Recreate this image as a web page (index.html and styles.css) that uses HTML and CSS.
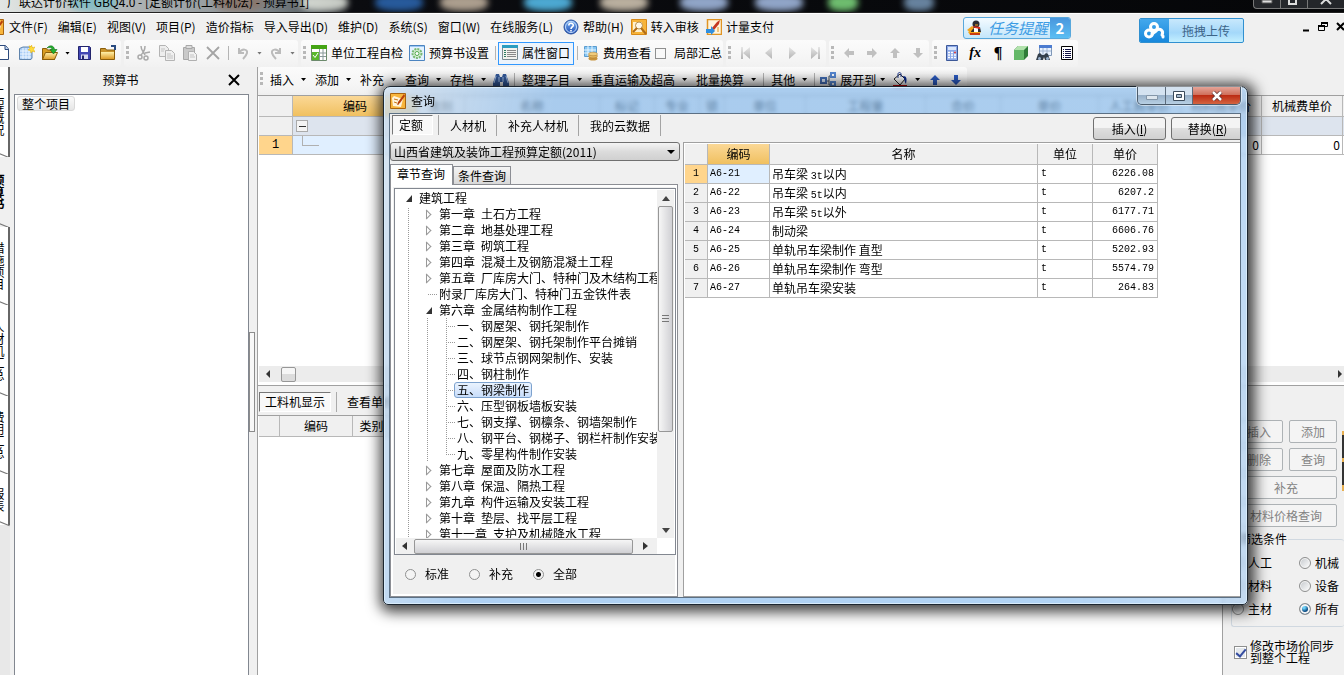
FILE: index.html
```html
<!DOCTYPE html>
<html lang="zh-CN">
<head>
<meta charset="utf-8">
<title>广联达计价软件 GBQ4.0</title>
<link rel="stylesheet" href="styles.css">
</head>
<body>
<svg class="defs" aria-hidden="true">
  <defs>
    <linearGradient id="gBlue" x1="0" y1="0" x2="0" y2="1"><stop offset="0" stop-color="#7db4f2"/><stop offset="1" stop-color="#1d4cb4"/></linearGradient>
    <linearGradient id="gGold" x1="0" y1="0" x2="0" y2="1"><stop offset="0" stop-color="#fff0a8"/><stop offset="1" stop-color="#dd9c28"/></linearGradient>
    <linearGradient id="gGrey" x1="0" y1="0" x2="0" y2="1"><stop offset="0" stop-color="#e6e6e6"/><stop offset="1" stop-color="#b4b4b4"/></linearGradient>
  </defs>
  <symbol id="page" viewBox="0 0 12 16"><path d="M-4 .5H5.500L8.500 4V14.500H-4z" fill="#fff" stroke="#2c4a7c"/><path d="M5 1v3.500h3.500" fill="#bcd4f4" stroke="#2c4a7c"/></symbol>
  <symbol id="newtable" viewBox="0 0 16 16"><path d="M.5 3.500 4 2h9v11l-1 1.500H.5z" fill="#a9cdf6" stroke="#6084ac"/><path d="M4 3v11M7 3v11M10 3v11M1 6h11M1 9h11M1 12h11" stroke="#eef6ff"/><path d="m12.500 0 .9 2.700L16 2l-1.500 2.200L16 7l-2.700-.8L12 8l-.6-2.500L9 5l2-1.500L10 .8l2 1z" fill="#ffdc3c" stroke="#e8b000" stroke-width=".5"/></symbol>
  <symbol id="open" viewBox="0 0 16 16"><path d="M.5 14.500v-11h4l1 1.500h7v9.500z" fill="#d99d22" stroke="#8b5e0a"/><path d="m.5 14.500 3-7h12l-3 7z" fill="url(#gGold)" stroke="#8b5e0a"/><path d="M5 3c3-3.500 7-2.500 7.500 1.500H15L11.500 9 8 4.500h2.200C9.800 2.500 7.500 2 5 3z" fill="#26b030" stroke="#0e6c16" stroke-width=".6"/></symbol>
  <symbol id="save" viewBox="0 0 16 16"><path d="M1.500 1.500h11l1 1v12h-12z" fill="#4246b4" stroke="#22246c"/><path d="M4 2h7v5H4z" fill="#fff"/><path d="M4 9.500h7V14H4z" fill="#d8d8ee"/><path d="M5 10.500h2V14H5z" fill="#22246c"/></symbol>
  <symbol id="folder" viewBox="0 0 16 16"><path d="M.5 14.500v-11h5l1 1.500h8v9.500z" fill="#c9942c" stroke="#8b5e0a"/><path d="M1 7h13v7H1z" fill="url(#gGold)"/><path d="M11 1h4v4" fill="none" stroke="#294b80" stroke-width="2"/></symbol>
  <symbol id="cut" viewBox="0 0 16 16"><path d="M5 1c0 4 2 5 4 9M9 1c0 4-1 6-4 9M9 8l5-1" stroke="#aaa" stroke-width="1.500" fill="none"/><circle cx="4" cy="12" r="2" fill="none" stroke="#aaa" stroke-width="1.500"/><circle cx="10" cy="13" r="2" fill="none" stroke="#aaa" stroke-width="1.500"/></symbol>
  <symbol id="copy" viewBox="0 0 16 16"><path d="M.5 .5h6l3 3v8h-9z" fill="#eee" stroke="#b4b4b4"/><path d="M6.500 5.500h6l3 3v7h-9z" fill="#f0f0f0" stroke="#b4b4b4"/><path d="M2 4h4M2 6h3M8 9h4M8 11h6M8 13h6" stroke="#c4c4c4"/></symbol>
  <symbol id="paste" viewBox="0 0 16 16"><path d="M1.500 2.500h11v12h-11z" fill="#c9c9c9" stroke="#a8a8a8"/><path d="M4 .5h6v3H4z" fill="#ddd" stroke="#a8a8a8"/><path d="M6.500 6.500h5l3 3v6h-8z" fill="#f2f2f2" stroke="#b0b0b0"/><path d="M8 10h4M8 12h5" stroke="#c4c4c4"/></symbol>
  <symbol id="del" viewBox="0 0 16 16"><path d="m2 2 12 12M14 2 2 14" stroke="#a4a4a4" stroke-width="1.800"/></symbol>
  <symbol id="undo" viewBox="0 0 14 16"><path d="M3 3v5h5M3 8c3-5 9-4 8 0-.4 2-2 4-4 6" fill="none" stroke="#bbb" stroke-width="2"/></symbol>
  <symbol id="redo" viewBox="0 0 14 16"><path d="M11 3v5H6m5 0C8 3 2 4 3 8c.4 2 2 4 4 6" fill="none" stroke="#bbb" stroke-width="2"/></symbol>
  <symbol id="check-table" viewBox="0 0 16 16"><path d="M.5 .5h15v15H.5z" fill="#fff" stroke="#6c8a6c"/><path d="M0 0h16v4H0z" fill="#44a414"/><path d="M8.500 4v11M12 4v11M1 8h14M1 11.500h14" stroke="#899"/><path d="M1 7h7v8H1z" fill="#59b72c"/><path d="m2 10 2 2.500L7 8" stroke="#fff" fill="none"/></symbol>
  <symbol id="gear" viewBox="0 0 16 16"><path d="M.5 .5h15v15H.5z" fill="#e4f2ff" stroke="#4c84c0"/><path d="M1 1h14v1H1z" fill="#9cc8f4"/><circle cx="8" cy="8.500" r="4.500" fill="#d8f0d4" stroke="#78b874" stroke-width="2" stroke-dasharray="2 1"/><circle cx="8" cy="8.500" r="2" fill="#fff" stroke="#50a84c"/></symbol>
  <symbol id="props" viewBox="0 0 16 16"><path d="M.5 .5h15v14H.5z" fill="#f2f2ee" stroke="#7a8a90"/><path d="M0 0h16v3H0z" fill="#2a9cc0"/><path d="M2 5.500h2M2 7.500h2M2 9.500h2M2 11.500h2" stroke="#2c7c60"/><path d="M5 5.500h9M5 7.500h9M5 9.500h9M5 11.500h9" stroke="#888"/></symbol>
  <symbol id="cost" viewBox="0 0 16 16"><path d="M1.500 1.500h12v10h-12z" fill="#8ac8f4" stroke="#5a9cd0"/><path d="M5 1v10M9 1v10M1 5h12M1 8h12" stroke="#e8f6ff"/><ellipse cx="10" cy="13.500" rx="4.500" ry="2" fill="#c8933c"/><ellipse cx="10" cy="11" rx="4.500" ry="2" fill="#e4b860" stroke="#a87424" stroke-width=".5"/><ellipse cx="10" cy="9" rx="4.500" ry="1.800" fill="#f0cc7c" stroke="#a87424" stroke-width=".5"/></symbol>
  <symbol id="first" viewBox="0 0 16 16"><path d="M3 2h2v12H3zM12 2v12L5 8z" fill="url(#gGrey)"/></symbol>
  <symbol id="prev" viewBox="0 0 16 16"><path d="M11 2v12L4 8z" fill="url(#gGrey)"/></symbol>
  <symbol id="next" viewBox="0 0 16 16"><path d="M5 2v12l7-6z" fill="url(#gGrey)"/></symbol>
  <symbol id="last" viewBox="0 0 16 16"><path d="M11 2h2v12h-2zM4 2v12l7-6z" fill="url(#gGrey)"/></symbol>
  <symbol id="arrow" viewBox="0 0 16 16"><path d="M8 3 3 8h3v5h4V8h3z"/></symbol>
  <symbol id="calc" viewBox="0 0 16 16"><path d="M2.500 .5h11v15h-11z" fill="#8ca8e8" stroke="#3c5898"/><path d="M4 2h8v3H4z" fill="#dce8fc"/><path d="M4 7.500h8M4 10h8M4 12.500h8" stroke="#fff" stroke-width="1.500" stroke-dasharray="2 1"/><path d="M10 7.500h2" stroke="#d44" stroke-width="1.500"/></symbol>
  <symbol id="cube" viewBox="0 0 16 16"><path d="m1 5 4-4h10v10l-4 4H1z" fill="#2f7c38"/><path d="M1 5h10v10H1z" fill="#64b868"/><path d="m1 5 4-4h10l-4 4z" fill="#b2e2ac"/></symbol>
  <symbol id="tablefind" viewBox="0 0 16 16"><path d="M3.500 .5h12v10h-12z" fill="#e8f2ff" stroke="#8098b8"/><path d="M3 0h13v3H3z" fill="#4c7cd0"/><path d="M7 3v7M11 3v7M4 6h11" stroke="#a0b4d0"/><path d="m2 9 2-1 2 2h2l2-2 2 1 2 6H9l-1-3-1 3H0z" fill="#34404c"/><circle cx="3.500" cy="13.500" r="1.500" fill="#9cb4d0"/><circle cx="11.500" cy="13.500" r="1.500" fill="#9cb4d0"/></symbol>
  <symbol id="report" viewBox="0 0 16 16"><path d="M2.500 1.500h11v13h-11z" fill="#fff" stroke="#000"/><path d="M4 4.500h1M4 6.500h1M4 8.500h1M4 10.500h1M4 12.500h1M6 4.500h6M6 6.500h6M6 8.500h6M6 10.500h6M6 12.500h6" stroke="#114"/></symbol>
  <symbol id="binoc" viewBox="0 0 16 16"><path d="M3 2h3l1 3h2l1-3h3l3 9v3h-6v-4H7v4H0v-3z" fill="#335a9c"/><path d="M3 4 1 11M6 5v5M10 5v5M13 4l2 7" stroke="#a9c4ec"/></symbol>
  <symbol id="tree" viewBox="0 0 16 16"><path d="M6 9h3M9 4v9M9 4h3M9 13h2" stroke="#456" fill="none"/><path d="M0 5h7v7H0z" fill="#4470b8"/><path d="M2 7h3v3H2z" fill="#dce8fc"/><path d="M10 0h6v6h-6zM10 9h6v6h-6z" fill="#5688d4"/><path d="M12 2h2v2h-2zM12 11h2v2h-2z" fill="#fff"/></symbol>
  <symbol id="fill" viewBox="0 0 16 16"><path d="m2 7 6-5 5 5-5 6z" fill="#fff" stroke="#222"/><path d="M6 6V2c0-2 3-2 3 0v3" fill="none" stroke="#223c90"/><path d="M11 4c4 0 4 3 3 8-2-2-1-5-3-8z" fill="#0a2a90"/><path d="M1 13h14v2H1z" fill="#d00000"/></symbol>
  <symbol id="note" viewBox="0 0 16 16"><path d="M.5 .5h15v15H.5z" fill="#f8b53c" stroke="#a86410"/><path d="m2 5 2-2 9 3-2 8-8-1z" fill="#fff4dc"/><path d="m4 6 4 1M4 9l3 1M9 9l-1 3" stroke="#c87818"/><path d="M14 1 8 9l-1 3 3-2 5-7z" fill="#b8400c"/></symbol>
  <symbol id="help" viewBox="0 0 16 16"><circle cx="8" cy="8" r="7" fill="url(#gBlue)" stroke="#2c54a0"/><circle cx="8" cy="8" r="5.500" fill="none" stroke="#c2dcfc"/><path d="M5.800 6.500c0-3 4.500-2.800 4.500-.3C10.300 8 8 8 8 10M8 11v1.500" fill="none" stroke="#fff" stroke-width="1.600"/></symbol>
  <symbol id="audit" viewBox="0 0 16 16"><path d="M.5 .5h15v15H.5z" fill="#f7b43a" stroke="#d88a18"/><path d="M2 3h9v10H2z" fill="#fff1cf"/><circle cx="8" cy="6.500" r="3.500" fill="#fff8e8" stroke="#b8904c"/><path d="m10 9 5 6M2 13l4-4" stroke="#b06c18" stroke-width="2"/></symbol>
  <symbol id="pay" viewBox="0 0 16 16"><path d="M1.500 .5h14v15h-14z" fill="#fff5dd" stroke="#e09424" stroke-width="1.500"/><path d="m6 9 5-6 3-2-1 4-5 6z" fill="#c43820"/><path d="M0 10h5V7l4 5-4 4v-2H0z" fill="#2f8fe0"/><path d="M12 8v5" stroke="#e09424"/></symbol>
</svg>

<div class="app">
  <header class="titlebar">
    <span class="title-text">广联达计价软件 GBQ4.0 - [定额计价(工料机法) - 预算书1]</span>
    <i class="blob b1"></i><i class="blob b2"></i><i class="blob b3"></i><i class="blob b4"></i><i class="blob b5"></i><i class="blob b6"></i><i class="blob b7"></i><i class="blob b8"></i><i class="blob b9"></i>
    <div class="win-controls">
      <button aria-label="最小化"><svg width="12" height="5"><path d="M1 0h10v3H1z" fill="#ddd" stroke="#555"/></svg></button>
      <button aria-label="还原"><svg width="12" height="5"><path d="M1 0v4h7V0" fill="none" stroke="#ddd" stroke-width="2"/></svg></button>
      <button class="wide" aria-label="关闭"><svg width="12" height="5"><path d="M1 4 5 0h2l4 4" fill="none" stroke="#ddd" stroke-width="2"/></svg></button>
    </div>
  </header>

  <nav class="menubar">
    <svg class="menu-logo" viewBox="12 0 4 16"><use href="#note" width="16" height="16"/></svg>
    <button>文件(F)</button><button>编辑(E)</button><button>视图(V)</button><button>项目(P)</button><button>造价指标</button><button>导入导出(D)</button><button>维护(D)</button><button>系统(S)</button><button>窗口(W)</button><button>在线服务(L)</button>
    <button><svg class="ic"><use href="#help"/></svg>帮助(H)</button>
    <button class="snug"><svg class="ic"><use href="#audit"/></svg>转入审核</button>
    <button class="snug"><svg class="ic"><use href="#pay"/></svg>计量支付</button>
    <div class="mdi">
      <button aria-label="最小化"><svg width="8" height="12"><path d="M1 9.500h6" stroke="#000" stroke-width="2"/></svg></button>
      <button aria-label="还原"><svg width="10" height="12"><path d="M3.500 1.500h6v4h-6zM.5 4.500h6v5h-6z" fill="#f0f0f0" stroke="#000"/><path d="M3 2h7M0 5h7" stroke="#000" stroke-width="2"/></svg></button>
      <button aria-label="关闭"><svg width="8" height="12"><path d="m1 2 7 7M8 2 1 9" stroke="#000" stroke-width="2"/></svg></button>
    </div>
  </nav>

  <button class="task-badge">
    <svg class="qq" viewBox="0 0 16 16"><path d="m1 12 5-3 8 3-3 3H3z" fill="#f4a41c"/><circle cx="9" cy="4" r="3.500" fill="#2c2c34"/><path d="M5 7h8l1 5H4z" fill="#2c2c34"/><path d="M7 8h4v4H7z" fill="#fff"/><path d="m5 6 8 1v2L8 8z" fill="#e02c1c"/><path d="m0 10 5-4 2 2-4 4z" fill="#f4a41c"/><path d="M3 14h10" stroke="#ca3c14" stroke-width="2"/><path d="M8 5h3" stroke="#f4a41c"/></svg>
    <em>任务提醒</em><b>2</b>
  </button>
  <button class="upload">
    <span class="upload-logo"><svg viewBox="0 0 22 18"><circle cx="5" cy="11.500" r="3.500"/><circle cx="10" cy="5" r="3.500"/><path d="m8 12 4-3c4-4 8 0 6 4"/><path d="M19 14v1"/></svg></span>
    <span class="upload-text">拖拽上传</span>
  </button>

  <div class="toolbar">
    <div class="seg first">
      <button aria-label="新建"><svg class="ic short"><use href="#page"/></svg></button>
      <button aria-label="新建表"><svg class="ic"><use href="#newtable"/></svg></button>
      <button aria-label="打开"><svg class="ic"><use href="#open"/></svg></button><i class="caret"></i>
      <button aria-label="保存"><svg class="ic"><use href="#save"/></svg></button>
      <button aria-label="目录"><svg class="ic"><use href="#folder"/></svg></button>
    </div>
    <div class="seg"><i class="grip"></i>
      <button aria-label="剪切"><svg class="ic"><use href="#cut"/></svg></button>
      <button aria-label="复制"><svg class="ic"><use href="#copy"/></svg></button>
      <button aria-label="粘贴"><svg class="ic"><use href="#paste"/></svg></button>
      <button aria-label="删除"><svg class="ic"><use href="#del"/></svg></button><i class="sep"></i>
      <button aria-label="撤销"><svg class="ic mid"><use href="#undo"/></svg></button><i class="caret dim"></i>
      <button aria-label="重做"><svg class="ic mid"><use href="#redo"/></svg></button><i class="caret dim"></i>
    </div>
    <div class="seg texts"><i class="grip"></i>
      <button class="tool"><svg class="ic"><use href="#check-table"/></svg>单位工程自检</button>
      <button class="tool"><svg class="ic"><use href="#gear"/></svg>预算书设置</button><i class="sep"></i>
      <button class="tool on"><svg class="ic"><use href="#props"/></svg>属性窗口</button><i class="sep"></i>
      <button class="tool"><svg class="ic"><use href="#cost"/></svg>费用查看</button>
      <label class="tick"><input type="checkbox">局部汇总</label>
    </div>
    <div class="seg"><i class="grip"></i>
      <button aria-label="首条"><svg class="ic"><use href="#first"/></svg></button>
      <button aria-label="上条"><svg class="ic"><use href="#prev"/></svg></button>
      <button aria-label="下条"><svg class="ic"><use href="#next"/></svg></button>
      <button aria-label="末条"><svg class="ic"><use href="#last"/></svg></button>
    </div>
    <div class="seg"><i class="grip"></i>
      <button aria-label="左移"><svg class="ic grey left"><use href="#arrow"/></svg></button>
      <button aria-label="右移"><svg class="ic grey right"><use href="#arrow"/></svg></button>
      <button aria-label="上移"><svg class="ic grey"><use href="#arrow"/></svg></button>
      <button aria-label="下移"><svg class="ic grey down"><use href="#arrow"/></svg></button>
    </div>
    <div class="seg"><i class="grip"></i>
      <button aria-label="计算器"><svg class="ic"><use href="#calc"/></svg></button>
      <button class="fx">fx</button>
      <button class="pilcrow">¶</button>
      <button aria-label="图元"><svg class="ic"><use href="#cube"/></svg></button>
      <button aria-label="查找"><svg class="ic"><use href="#tablefind"/></svg></button>
      <button aria-label="报表"><svg class="ic"><use href="#report"/></svg></button>
    </div>
  </div>

  <div class="main">
    <nav class="side-tabs">
      <button class="t1">工程概况</button>
      <button class="t2 on">预算书</button>
      <button class="t3">措施项目</button>
      <button class="t4">人材机汇总</button>
      <button class="t5">费用汇总</button>
      <button class="t6">报表</button>
    </nav>

    <section class="project">
      <div class="project-head"><h2>预算书</h2><button aria-label="关闭"><svg width="12" height="12"><path d="m1 1 10 10M11 1 1 11" stroke="#000" stroke-width="2"/></svg></button></div>
      <div class="project-body"><button class="root-node">整个项目</button></div>
    </section>
    <div class="splitter"><i></i></div>

    <section class="work">
      <div class="toolbar sub">
        <div class="seg"><i class="grip"></i>
          <button class="drop">插入<i class="caret"></i></button><button class="drop">添加<i class="caret"></i></button><button class="drop">补充<i class="caret"></i></button><button class="drop">查询<i class="caret"></i></button><button class="drop">存档<i class="caret"></i></button>
          <button aria-label="查找"><svg class="ic"><use href="#binoc"/></svg></button><i class="sep"></i>
          <button class="drop">整理子目<i class="caret"></i></button><button class="drop">垂直运输及超高<i class="caret"></i></button><button class="drop">批量换算<i class="caret"></i></button><i class="sep"></i>
          <button class="drop">其他<i class="caret"></i></button><i class="sep"></i>
          <button class="drop tree-drop"><svg class="ic"><use href="#tree"/></svg>展开到<i class="caret"></i></button>
          <button class="drop"><svg class="ic"><use href="#fill"/></svg><i class="caret"></i></button>
          <button aria-label="上移"><svg class="ic blue"><use href="#arrow"/></svg></button>
          <button aria-label="下移"><svg class="ic blue down"><use href="#arrow"/></svg></button>
        </div>
      </div>

      <div class="grid-pane">
        <div class="grid-scroll">
          <table class="grid">
            <colgroup><col class="w34"><col class="w125"><col class="w47"><col class="w135"><col class="w55"><col class="w45"><col class="w25"><col class="w81"><col class="w120"><col class="w75"><col class="w98"><col class="w82"><col class="w81"><col class="w81"><col class="w81"></colgroup>
            <thead><tr><th></th><th class="hot">编码</th><th>类别</th><th>名称</th><th>标记</th><th>专业</th><th>锁</th><th>单位</th><th>工程量</th><th>合价</th><th>单价</th><th>人工费单价</th><th>材料费单价</th><th>机械费单价</th><th></th></tr></thead>
            <tbody>
              <tr class="total"><th></th><td><span class="minus"></span></td><td></td><td></td><td></td><td></td><td></td><td></td><td></td><td></td><td></td><td></td><td></td><td></td><td></td></tr>
              <tr><th class="cur">1</th><td class="sel"><span class="branch"></span></td><td class="sel"></td><td></td><td></td><td></td><td></td><td></td><td></td><td></td><td></td><td></td><td>0</td><td>0</td><td></td></tr>
            </tbody>
          </table>
        </div>
        <div class="hbar"><svg width="6" height="8"><path d="M5 0v8L1 4z" fill="#333"/></svg><i class="hthumb"></i><svg class="end" width="6" height="8"><path d="M1 0v8l4-4z" fill="#333"/></svg></div>
      </div>

      <div class="lower">
        <div class="detail">
          <div class="detail-tabs"><button class="pressed">工料机显示</button><i></i><button>查看单价构成</button></div>
          <div class="detail-body">
            <table class="grid detail-grid"><colgroup><col class="w21"><col class="w73"><col class="w38"><col class="w135"></colgroup><thead><tr><th></th><th>编码</th><th>类别</th><th>名称</th></tr></thead></table>
          </div>
        </div>
        <aside class="options">
          <div class="opt-buttons">
            <button disabled>插入</button><button disabled>添加</button>
            <button disabled>删除</button><button disabled>查询</button>
            <button class="full" disabled>补充</button><button class="full" disabled>材料价格查询</button>
          </div>
          <fieldset>
            <legend>筛选条件</legend>
            <label><input type="radio" name="kind">人工</label><label><input type="radio" name="kind">机械</label>
            <label><input type="radio" name="kind">材料</label><label><input type="radio" name="kind">设备</label>
            <label><input type="radio" name="kind">主材</label><label><input type="radio" name="kind" checked>所有</label>
          </fieldset>
          <label class="sync"><input type="checkbox" checked><span>修改市场价同步到整个工程</span></label>
          <i class="edge-handle"></i>
        </aside>
      </div>
    </section>
  </div>

  <div class="dialog" role="dialog" aria-labelledby="dlg-title">
    <div class="dlg-title">
      <svg class="ic"><use href="#note"/></svg><h1 id="dlg-title">查询</h1>
      <div class="dlg-controls">
        <button aria-label="最小化"><svg width="12" height="5"><path d="M.5 .5h11v4H.5z" fill="#dde6ee" stroke="#8496a8"/></svg></button>
        <button aria-label="最大化"><svg width="12" height="10"><path d="M.5 .5h11v9H.5z" fill="#fff" stroke="#3d4c5c"/><path d="M3.500 3.500h5v3h-5z" fill="#a8bcd0" stroke="#3d4c5c"/></svg></button>
        <button class="close" aria-label="关闭"><svg width="12" height="10"><path d="m2 1 8 8M10 1 2 9" stroke="#5c2c2c" stroke-width="4"/><path d="m2 1 8 8M10 1 2 9" stroke="#fff" stroke-width="2.500"/></svg></button>
      </div>
    </div>
    <div class="dlg-body">
      <div class="dlg-top">
        <div class="dlg-tabs"><button class="pressed">定额</button><button>人材机</button><button>补充人材机</button><button>我的云数据</button></div>
        <div class="dlg-actions"><button>插入(<u>I</u>)</button><button>替换(<u>R</u>)</button></div>
      </div>
      <div class="dlg-cols">
        <div class="dlg-left">
          <select aria-label="定额库"><option>山西省建筑及装饰工程预算定额(2011)</option></select>
          <div class="subtabs"><button class="on">章节查询</button><button>条件查询</button></div>
          <div class="pane">
            <div class="tree-box">
              <ul class="tree">
                <li class="l0 open"><span>建筑工程</span></li>
                <li class="l1 shut"><span>第一章</span><span>土石方工程</span></li>
                <li class="l1 shut"><span>第二章</span><span>地基处理工程</span></li>
                <li class="l1 shut"><span>第三章</span><span>砌筑工程</span></li>
                <li class="l1 shut"><span>第四章</span><span>混凝土及钢筋混凝土工程</span></li>
                <li class="l1 shut"><span>第五章</span><span>厂库房大门、特种门及木结构工程</span></li>
                <li class="l1 leaf"><span>附录厂库房大门、特种门五金铁件表</span></li>
                <li class="l1 open"><span>第六章</span><span>金属结构制作工程</span></li>
                <li class="l2"><span>一、钢屋架、钢托架制作</span></li>
                <li class="l2"><span>二、钢屋架、钢托架制作平台摊销</span></li>
                <li class="l2"><span>三、球节点钢网架制作、安装</span></li>
                <li class="l2"><span>四、钢柱制作</span></li>
                <li class="l2 picked"><span>五、钢梁制作</span></li>
                <li class="l2"><span>六、压型钢板墙板安装</span></li>
                <li class="l2"><span>七、钢支撑、钢檩条、钢墙架制作</span></li>
                <li class="l2"><span>八、钢平台、钢梯子、钢栏杆制作安装</span></li>
                <li class="l2 end"><span>九、零星构件制作安装</span></li>
                <li class="l1 shut"><span>第七章</span><span>屋面及防水工程</span></li>
                <li class="l1 shut"><span>第八章</span><span>保温、隔热工程</span></li>
                <li class="l1 shut"><span>第九章</span><span>构件运输及安装工程</span></li>
                <li class="l1 shut"><span>第十章</span><span>垫层、找平层工程</span></li>
                <li class="l1 shut"><span>第十一章</span><span>支护及机械降水工程</span></li>
              </ul>
              <div class="vscroll"><svg width="8" height="5"><path d="M0 5h8L4 0z" fill="#444"/></svg><i></i><svg width="8" height="5"><path d="M0 0h8L4 5z" fill="#444"/></svg></div>
              <div class="hscroll"><svg width="5" height="8"><path d="M5 0v8L0 4z" fill="#333"/></svg><i></i><svg width="5" height="8"><path d="M0 0v8l5-4z" fill="#333"/></svg></div>
            </div>
            <div class="scope">
              <label><input type="radio" name="scope">标准</label><label><input type="radio" name="scope">补充</label><label><input type="radio" name="scope" checked>全部</label>
            </div>
          </div>
        </div>
        <div class="dlg-right">
          <table class="grid quota">
            <colgroup><col class="w23"><col class="w62"><col class="w268"><col class="w55"><col class="w65"></colgroup>
            <thead><tr><th></th><th class="hot">编码</th><th>名称</th><th>单位</th><th>单价</th></tr></thead>
            <tbody>
              <tr><th class="cur">1</th><td class="code sel">A6-21</td><td>吊车梁 <span class="mono">3t</span>以内</td><td class="mono">t</td><td class="mono num">6226.08</td></tr>
              <tr><th>2</th><td class="code">A6-22</td><td>吊车梁 <span class="mono">5t</span>以内</td><td class="mono">t</td><td class="mono num">6207.2</td></tr>
              <tr><th>3</th><td class="code">A6-23</td><td>吊车梁 <span class="mono">5t</span>以外</td><td class="mono">t</td><td class="mono num">6177.71</td></tr>
              <tr><th>4</th><td class="code">A6-24</td><td>制动梁</td><td class="mono">t</td><td class="mono num">6606.76</td></tr>
              <tr><th>5</th><td class="code">A6-25</td><td>单轨吊车梁制作 直型</td><td class="mono">t</td><td class="mono num">5202.93</td></tr>
              <tr><th>6</th><td class="code">A6-26</td><td>单轨吊车梁制作 弯型</td><td class="mono">t</td><td class="mono num">5574.79</td></tr>
              <tr><th>7</th><td class="code">A6-27</td><td>单轨吊车梁安装</td><td class="mono">t</td><td class="mono num">264.83</td></tr>
            </tbody>
          </table>
        </div>
      </div>
    </div>
  </div>
</div>
</body>
</html>
```
FILE: styles.css
```css
* { box-sizing: border-box; }
html, body { height: 100%; margin: 0; }
body { font: 12px/16px "Noto Sans CJK SC", sans-serif; color: #000; background: #f0f0f0; overflow: hidden; }
button, select, input, label { font: inherit; color: inherit; }
button { margin: 0; padding: 0; border: 0; background: none; white-space: nowrap; }
h1, h2 { margin: 0; font: inherit; }
svg { display: block; flex: none; }
.defs { position: absolute; width: 0; height: 0; }
.ic { width: 16px; height: 16px; }
.ic.short { width: 12px; }
.ic.mid { width: 14px; }
.app { position: relative; display: flex; flex-direction: column; height: 100%; overflow: hidden; }

/* title bar */
.titlebar { position: relative; flex: none; height: 13px; overflow: hidden; display: flex; justify-content: space-between; border-bottom: 1px solid #222; background: linear-gradient(90deg, #e2e6e4 0, #b9bdbd 100px, #8d9498 240px, #5d6468 310px, #0b0c10 350px, #050608 100%); }
.title-text { position: relative; z-index: 1; padding-left: 7px; line-height: 4px; white-space: nowrap; }
.blob { position: absolute; top: -6px; width: 48px; height: 17px; border-radius: 40%; filter: blur(3px); opacity: .85; }
.b1 { left: 70px; background: #7dbcc4; } .b2 { left: 215px; background: #8a7468; } .b3 { left: 300px; background: #e4e8e0; }
.b4 { left: 375px; background: #2c68b4; } .b5 { left: 440px; background: #c8b8a4; } .b6 { left: 524px; background: #58c4f4; }
.b7 { left: 600px; background: #d8ccb8; } .b8 { left: 680px; background: #a8c0e8; box-shadow: 75px 0 #a8c0e8; } .b9 { left: 828px; width: 30px; background: #80dc80; box-shadow: 76px 0 #7898b8; }
.win-controls { position: relative; display: flex; height: 9px; border: 1px solid #777; border-top: 0; border-right: 0; border-radius: 0 0 0 4px; background: #24262a; }
.win-controls button { display: flex; justify-content: center; width: 27px; border-right: 1px solid #777; }
.win-controls .wide { width: 36px; border: 0; }

/* menu */
.menubar { flex: none; display: flex; align-items: center; gap: 10px; height: 27px; padding-bottom: 1px; border-top: 1px solid #fff; }
.menubar button { display: flex; align-items: center; gap: 4px; }
.menu-logo { width: 4px; height: 16px; margin-right: -5px; }
.menubar .snug { margin-left: -3px; }
.mdi { display: flex; gap: 8px; margin-left: auto; }

.task-badge { position: absolute; right: 273px; top: 17px; display: flex; align-items: center; height: 22px; border: 1px solid #58a8dc; border-radius: 3px; background: linear-gradient(#f4fbff, #c4e6fa); overflow: hidden; }
.qq { width: 18px; height: 16px; margin: 0 2px; }
.task-badge em { width: 64px; font-size: 15px; color: #3c9ce4; }
.task-badge b { width: 20px; line-height: 22px; background: linear-gradient(#4894dc, #5cc0f4); color: #fff; font-size: 15px; }
.upload { position: absolute; right: 100px; top: 18px; display: flex; height: 25px; border: 1px solid #3090d0; border-radius: 2px; background: linear-gradient(#c8e8fc, #a4d8fa 60%, #c4f0ff); overflow: hidden; }
.upload-logo { display: flex; align-items: center; justify-content: center; width: 29px; height: 100%; background: linear-gradient(#44a8ec, #1888dc); }
.upload-logo svg { width: 22px; height: 18px; fill: none; stroke: #fff; stroke-width: 3; stroke-linecap: round; }
.upload-text { width: 74px; line-height: 24px; color: #3c6488; }

/* toolbars */
.toolbar { flex: none; display: flex; gap: 3px; height: 27px; }
.seg { display: flex; align-items: center; gap: 7px; padding: 0 3px 1px 2px; border-radius: 3px; background: linear-gradient(#fbfbfb, #f6f6f6 60%, #f1f1f1); }
.seg.first { padding-left: 0; padding-right: 5px; }
.grip { width: 3px; height: 15px; background: repeating-linear-gradient(#b8b8b8 0 3px, transparent 3px 5px); }
.sep { width: 1px; height: 14px; background: #b4b4b4; }
.caret { flex: none; width: 5px; height: 3px; background: #000; clip-path: polygon(0 0, 100% 0, 50% 100%); }
.caret.dim { background: #777; }
.texts { gap: 0; padding-right: 1px; }
.texts .grip { margin-right: 2px; }
.texts .sep { margin: 0 2px 0 3px; }
.tool { display: flex; align-items: center; gap: 4px; height: 23px; padding: 0 3px; }
.tool.on { border: 1px solid #3399ff; padding: 0 3px; background: #edf4fc; }
.tick { display: flex; align-items: center; gap: 8px; white-space: nowrap; }
.tick input { appearance: none; width: 11px; height: 11px; margin: 0 0 0 1px; border: 1px solid #8e8f8f; background: #f8f8f8; }
.grey { fill: #c0c0c0; } .blue { fill: #2c5cc4; }
.left { transform: rotate(-90deg); } .right { transform: rotate(90deg); } .down { transform: rotate(180deg); }
.fx { width: 16px; font: italic bold 14px/16px "Liberation Serif", serif; }
.pilcrow { width: 16px; font: bold 16px/16px "Liberation Serif", serif; }
.toolbar.sub { height: 28px; padding-bottom: 2px; }
.sub .seg { gap: 5px; }
.drop { display: flex; align-items: center; gap: 7px; padding: 0 2px; }
.tree-drop { gap: 4px; padding: 0; }

/* main split */
.main { flex: 1; min-height: 0; display: flex; }
.side-tabs { flex: none; width: 10px; display: flex; flex-direction: column; overflow: hidden; background: #e8e8e8; }
.side-tabs button { position: relative; flex: none; width: 10px; padding-right: 4px; display: flex; flex-direction: column; align-items: center; justify-content: flex-start; border-right: 2px solid #666; background: #fff; writing-mode: vertical-rl; line-height: 12px; text-orientation: upright; }
.side-tabs button::after { content: ""; position: absolute; left: -2px; bottom: 1px; width: 12px; height: 1px; background: #777; transform: rotate(22deg); }
.side-tabs .on { background: #f0f0f0; border-color: #f0f0f0; font-weight: bold; }
.t1 { height: 90px; } .t2 { height: 70px; } .t3 { height: 78px; } .t4 { height: 91px; } .t5 { height: 78px; } .t6 { height: 51px; }
.project { flex: none; width: 235px; margin-left: 4px; display: flex; flex-direction: column; }
.project-head { display: flex; align-items: center; height: 27px; padding: 0 9px 1px 0; }
.project-head h2 { flex: 1; padding-right: 1px; text-align: center; }
.project-body { flex: 1; padding: 1px 2px; border: 1px solid #828790; border-bottom: 0; background: #fff; }
.root-node { display: block; height: 15px; padding: 0 4px; border: 1px solid #d9d9d9; border-radius: 3px; background: linear-gradient(#fafafa, #e6e6e6); line-height: 13px; }
.splitter { flex: none; width: 9px; display: flex; align-items: center; justify-content: flex-end; padding: 22px 2px 0 0; border-right: 1px solid #a0a0a0; }
.splitter i { width: 6px; height: 100px; border: 1px solid #8c8c8c; background: #f8f8f8; }
.work { flex: 1; min-width: 0; display: flex; flex-direction: column; }

/* grids */
.grid { border-collapse: separate; border-spacing: 0; table-layout: fixed; width: 1px; }
.grid th, .grid td { height: 19px; padding: 0 2px; border-right: 1px solid #b8b8b8; border-bottom: 1px solid #b8b8b8; background: #fff; font-weight: normal; line-height: 16px; white-space: nowrap; overflow: hidden; }
.grid th { background: #f0f0f0; }
.grid thead th { height: 21px; }
.grid .hot { background: linear-gradient(#fbd896, #f0c060); }
.grid .cur { background: #ffd58c; font-family: "Liberation Mono", monospace; }
.grid td.sel { background: #e0efff; }
.w21 { width: 21px; } .w23 { width: 23px; } .w25 { width: 25px; } .w34 { width: 34px; } .w38 { width: 38px; } .w45 { width: 45px; } .w47 { width: 47px; } .w55 { width: 55px; } .w62 { width: 62px; } .w65 { width: 65px; } .w73 { width: 73px; } .w75 { width: 75px; } .w81 { width: 81px; } .w82 { width: 82px; } .w98 { width: 98px; } .w120 { width: 120px; } .w125 { width: 125px; } .w135 { width: 135px; } .w268 { width: 268px; }
.grid-pane { flex: 1; min-height: 0; display: flex; flex-direction: column; border: 1px solid #a0a0a0; border-width: 1px 0; background: #fff; padding-left: 1px; }
.grid-scroll { flex: 1; min-height: 0; overflow: hidden; }
.grid-scroll td { text-align: right; }
.grid .total td { background: #dde4ee; }
.minus { display: block; width: 12px; height: 12px; margin: 0 1px; border: 1px solid #aaa; background: linear-gradient(#333, #333) center / 7px 1px no-repeat #f4f4f4; }
.branch { display: block; width: 17px; height: 10px; margin: -9px 0 0 7px; border: 1px solid #b0b0b0; border-width: 0 0 1px 1px; }
.hbar { display: flex; align-items: center; gap: 10px; height: 16px; margin-bottom: 3px; padding: 0 1px 0 6px; background: #ececec; }
.hthumb { width: 15px; height: 15px; border: 1px solid #979797; border-radius: 2px; background: linear-gradient(#f6f6f6 50%, #dcdcdc 50%); }
.hbar .end { margin-left: auto; }
.lower { flex: 1; min-height: 0; display: flex; }
.detail { flex: 1; min-width: 0; display: flex; flex-direction: column; }
.detail-tabs { display: flex; align-items: center; gap: 5px; height: 29px; padding: 5px 1px 2px; }
.detail-tabs button { height: 20px; padding: 0 5px; }
.detail-tabs i { width: 1px; height: 20px; background: #aaa; }
.detail-tabs .pressed, .dlg-tabs .pressed { border: 1px solid; border-color: #777 #fff #fff #777; background: #f8f8f8; }
.detail-body { flex: 1; min-height: 0; overflow: hidden; border-top: 1px solid #a0a0a0; padding-left: 1px; background: #fff; }
.options { position: relative; flex: none; width: 122px; padding: 34px 0 0; border-left: 1px solid #a0a0a0; }
.opt-buttons { display: grid; grid-template-columns: 1fr 1fr; gap: 5px 6px; padding: 0 7px 0 12px; }
.opt-buttons button { height: 23px; border: 1px solid #adb2b5; border-radius: 2px; background: #f4f4f4; color: #838383; }
.opt-buttons .full { grid-column: 1 / 3; }
.options fieldset { display: grid; grid-template-columns: 67px 1fr; row-gap: 7px; margin: 5px 0 0 8px; padding: 9px 0 9px; border: 1px solid #d0d8e0; border-right: 0; border-radius: 3px; min-width: 0; }
.options legend { padding: 0 1px; margin-left: 6px; line-height: 14px; }
.options label { display: flex; align-items: center; gap: 4px; white-space: nowrap; }
.options input { margin: 0; }
.options input[type=radio], .scope input { appearance: none; flex: none; width: 12px; height: 12px; border: 1px solid #8e8f8f; border-radius: 50%; background: #f4f4f4; }
.options input[type=radio] { box-shadow: inset 0 0 0 1px #f4f4f4; background: linear-gradient(135deg, #c4c8cc, #fff); }
.options input[type=radio]:checked { background: radial-gradient(circle at 40% 35%, #6cd0f8 0 1px, #0c4c84 4px); box-shadow: inset 0 0 0 2px #f4f4f4; }
.options .sync { gap: 3px; margin: 13px 0 0 11px; line-height: 12px; }
.sync span { white-space: normal; width: 84px; }
.sync input { appearance: none; flex: none; width: 13px; height: 13px; border: 1px solid #8e8f8f; box-shadow: inset 0 0 0 1px #fff; background: #e4e8ec; position: relative; }
.sync input::after { content: ""; position: absolute; left: 3px; top: 0; width: 4px; height: 8px; border: solid #344ca0; border-width: 0 2px 2px 0; transform: rotate(40deg); }
.edge-handle { position: absolute; right: 0; top: 45px; width: 2px; height: 60px; background: linear-gradient(#e8b050 4px, #333 4px 27px, #e8b050 27px 31px, #333 31px 54px, #e8b050 54px); }

/* query dialog */
.dialog { position: absolute; left: 383px; top: 86px; width: 865px; height: 519px; display: flex; flex-direction: column; padding: 1px 6px 6px 5px; border: 1px solid #1c2630; border-radius: 7px 7px 5px 5px; background: linear-gradient(100deg, rgba(204, 220, 236, .75), rgba(132, 184, 236, .66) 170px, rgba(136, 188, 238, .66) 80%, rgba(176, 208, 240, .7)); backdrop-filter: blur(2px); box-shadow: inset 0 0 0 1px #d8ebfa, 2px 2px 14px 5px rgba(0, 0, 0, .75); }
.dlg-title { flex: none; display: flex; align-items: center; gap: 5px; height: 25px; padding-left: 1px; }
.dlg-controls { align-self: flex-start; display: flex; height: 18px; margin-left: auto; margin-top: -1px; border: 1px solid #4c5c6c; border-top: 0; border-radius: 0 0 5px 5px; overflow: hidden; box-shadow: 0 0 0 1px rgba(255, 255, 255, .5); }
.dlg-controls button { width: 27px; display: flex; align-items: center; justify-content: center; border-right: 1px solid #5c6c7c; background: linear-gradient(#d4e2f0 45%, #98b0c8 50%, #b8d0e4); }
.dlg-controls button:first-child { width: 28px; padding-top: 4px; }
.dlg-controls .close { width: 47px; border: 0; background: linear-gradient(#e4a498, #d0705c 45%, #bc2c14 50%, #d46440); }
.dlg-body { flex: 1; min-height: 0; display: flex; flex-direction: column; overflow: hidden; border: 1px solid #5c7084; background: #f0f0f0; }
.dlg-top { flex: none; display: flex; justify-content: space-between; height: 28px; overflow: hidden; }
.dlg-tabs { display: flex; align-items: flex-start; height: 22px; padding: 1px 2px; }
.dlg-tabs button { height: 21px; padding: 0 10px; border-right: 1px solid #a4a4a4; }
.dlg-tabs button + button { padding-left: 11px; }
.dlg-tabs .pressed { height: 20px; padding: 0 9px 0 6px; margin-right: 6px; box-shadow: 5px 0 0 #f0f0f0, 6px 0 0 #a4a4a4; }
.dlg-actions { display: flex; gap: 5px; padding-top: 3px; }
.dlg-actions button { width: 73px; height: 23px; border: 1px solid #707070; border-radius: 3px; background: linear-gradient(#f4f4f4 45%, #dedede 50%, #d0d0d0); }
.dlg-actions button:last-child { margin-right: -4px; }
.dlg-cols { flex: 1; min-height: 0; display: flex; gap: 3px; }
.dlg-left { flex: none; width: 290px; display: flex; flex-direction: column; }
.dlg-left select { flex: none; appearance: none; height: 19px; padding: 0 3px; border: 1px solid #707070; border-radius: 3px; background: url("data:image/svg+xml,%3Csvg xmlns='http://www.w3.org/2000/svg' width='8' height='4'%3E%3Cpath d='M0 0h8L4 4z'/%3E%3C/svg%3E") right 4px center no-repeat, linear-gradient(#f4f4f4, #dcdcdc 50%, #d0d0d0); line-height: 17px; }
.subtabs { flex: none; display: flex; align-items: flex-end; height: 23px; }
.subtabs button { height: 18px; padding: 0 4px; border: 1px solid #8c8e94; border-bottom: 0; background: linear-gradient(#f4f4f4, #d8d8d8); line-height: 16px; }
.subtabs .on { position: relative; height: 21px; margin-bottom: -1px; padding: 0 7px 2px 6px; background: #fff; border-color: #8c8e94; }
.pane { flex: 1; min-height: 0; margin-right: 2px; display: flex; flex-direction: column; padding: 3px 1px 1px 3px; border: 1px solid #8c8e94; box-shadow: inset 0 0 0 2px #fff; }
.tree-box { flex: 1; min-height: 0; display: grid; grid-template: 1fr 16px / 1fr 17px; padding: 1px 1px 0; border: 1px solid #828790; background: #fff; }
.tree { margin: 0; padding: 0; list-style: none; overflow: hidden; background: repeating-linear-gradient(#999 0 1px, transparent 1px 2px) 12px 18px / 1px 100% no-repeat; }
.tree li { position: relative; display: flex; gap: 6px; height: 16px; line-height: 16px; white-space: nowrap; }
.l0 { padding-left: 23px; } .l1 { padding-left: 43px; } .l2 { padding-left: 58px; }
.tree .l1::after, .tree .l2::before, .tree .leaf::before { content: ""; position: absolute; }
.tree .l1::before, .tree .l0::before { content: ""; position: absolute; top: 5px; width: 6px; height: 7px; }
.tree .l0::before { left: 10px; } .tree .l1::before { left: 30px; }
.tree .open::before { background: #333; clip-path: polygon(100% 0, 100% 100%, 0 100%); }
.tree .shut::before { border: solid #999; border-width: 1px 1px 0 0; width: 6px; height: 6px; left: 27px; transform: rotate(45deg); }
.tree .shut::after { left: 30px; top: 4px; width: 1px; height: 9px; background: #999; }
.tree .leaf::before { left: 32px; top: 8px; width: 10px; height: 1px; background: repeating-linear-gradient(90deg, #999 0 1px, transparent 1px 2px); }
.tree .l2 { background: repeating-linear-gradient(#999 0 1px, transparent 1px 2px) 31px 0 / 1px 100% no-repeat, repeating-linear-gradient(#999 0 1px, transparent 1px 2px) 50px 0 / 1px 100% no-repeat; }
.tree .l2.end { background-size: 1px 100%, 1px 8px; }
.tree .l2::before { left: 50px; top: 8px; width: 9px; height: 1px; background: repeating-linear-gradient(90deg, #999 0 1px, transparent 1px 2px); }
.l2 span { padding: 0 3px; }
.picked span { border: 1px solid #7da2ce; border-radius: 3px; background: linear-gradient(#eaf3fe, #c8ddfa); line-height: 14px; padding: 0 2px; }
.vscroll { display: flex; flex-direction: column; align-items: center; gap: 5px; padding: 6px 1px 5px; background: #f0f0f0; }
.vscroll i { flex: 0 1 226px; width: 15px; margin-bottom: auto; border: 1px solid #979797; border-radius: 2px; background: repeating-linear-gradient(#777 0 1px, transparent 1px 3px) center / 7px 8px no-repeat, linear-gradient(90deg, #f6f6f6, #d0d0d4); }
.hscroll { display: flex; align-items: center; gap: 7px; padding: 0 9px 0 6px; background: #f0f0f0; }
.hscroll i { flex: 0 1 219px; height: 15px; margin-right: auto; border: 1px solid #979797; border-radius: 2px; background: repeating-linear-gradient(90deg, #777 0 1px, transparent 1px 3px) center / 8px 7px no-repeat, linear-gradient(#f6f6f6, #d0d0d4); }
.scope { flex: none; display: flex; align-items: center; gap: 20px; height: 38px; padding-left: 11px; margin-bottom: 2px; }
.scope label { display: flex; align-items: center; gap: 9px; }
.scope input { width: 11px; height: 11px; margin: 0; }
.scope input:checked { background: radial-gradient(#000 0 2px, #f4f4f4 3px); }
.dlg-right { flex: 1; min-width: 0; overflow: hidden; padding: 1px; border: 1px solid #a0a0a0; border-right: 0; background: #fff; }
.quota th { font-size: 12px; }
.quota tbody th { font: 10px/16px "Liberation Mono", monospace; }
.quota .code, .mono { font-family: "Liberation Mono", monospace; font-size: 10px; }
.quota span.mono { line-height: 10px; }
.quota td.mono { padding: 0 3px; }
.quota .num { text-align: right; }
```
